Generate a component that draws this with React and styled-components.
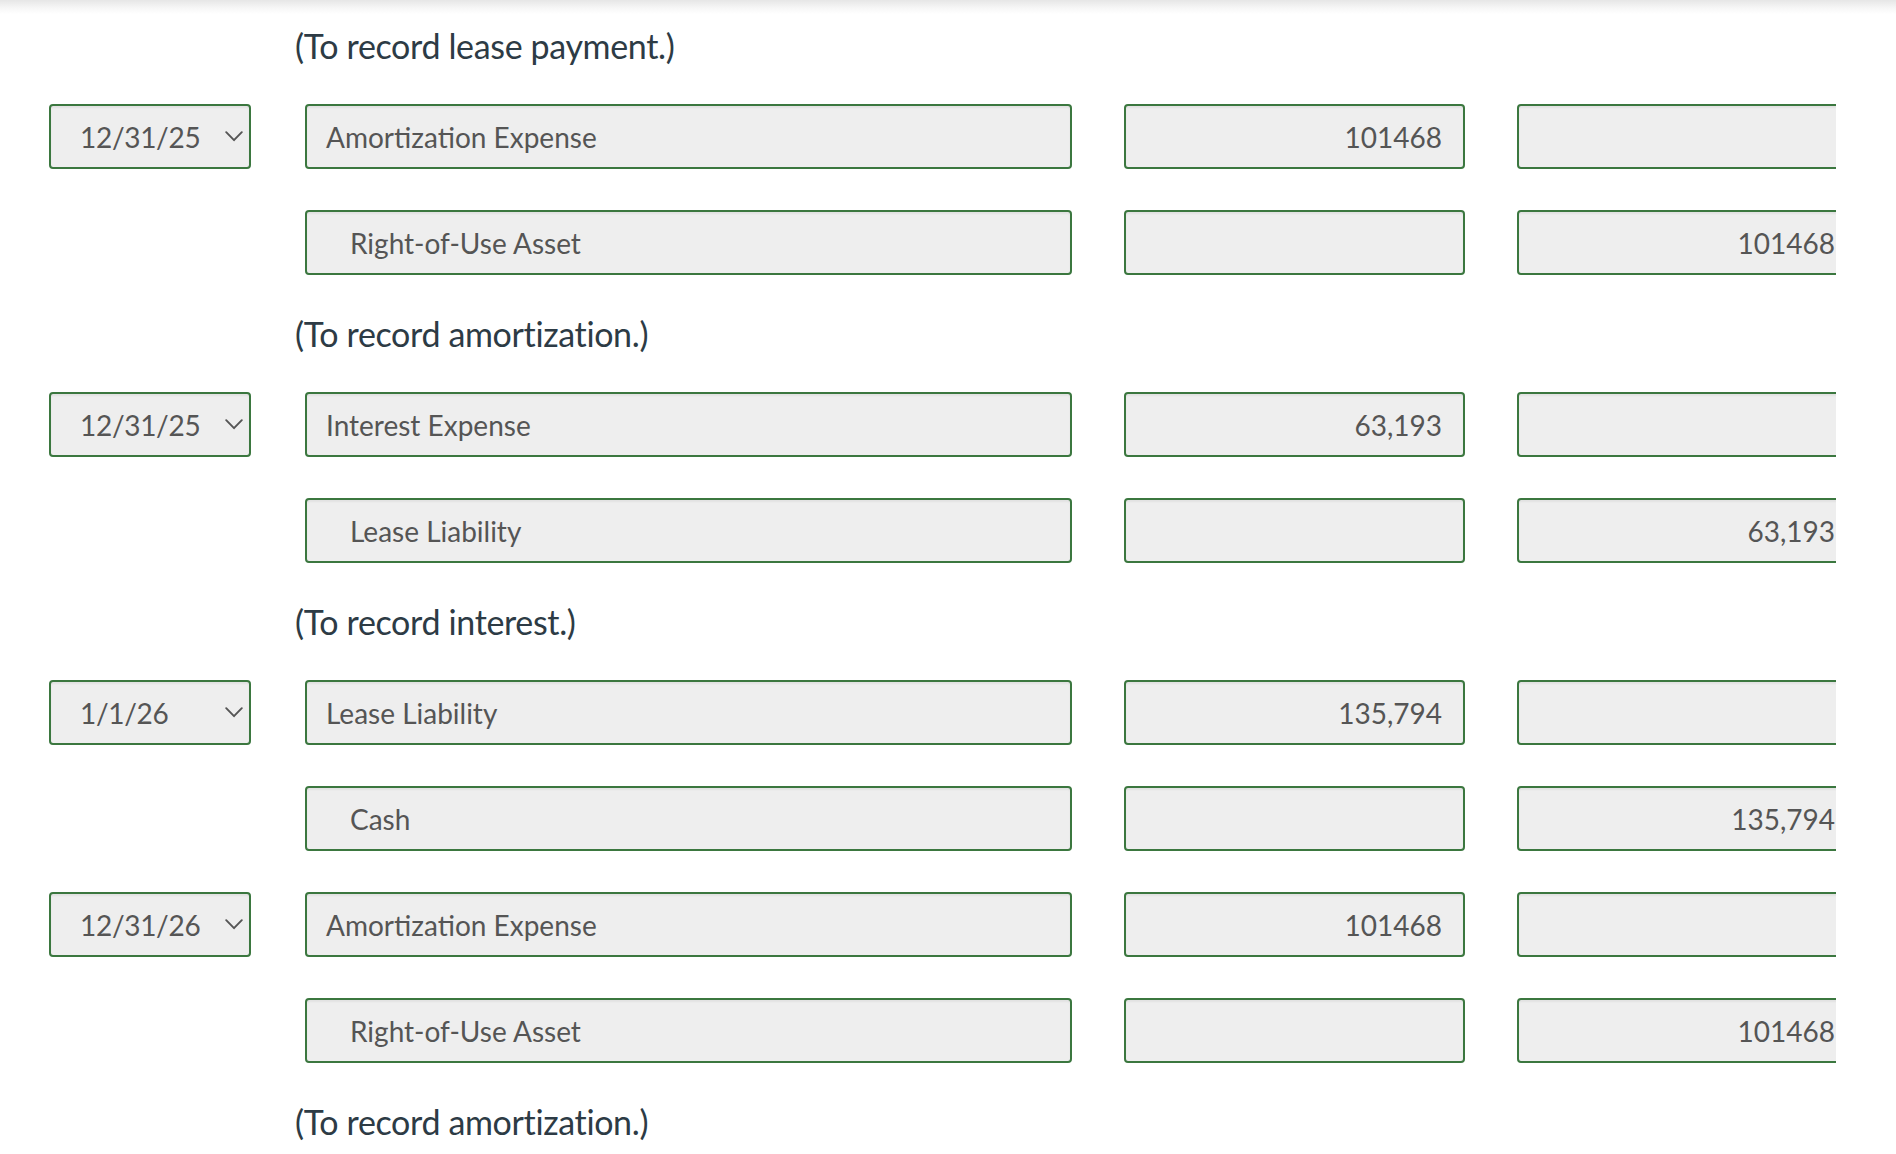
import React from "react";
import styled, { createGlobalStyle } from "styled-components";

const GlobalStyle = createGlobalStyle`
  html, body {
    margin: 0;
    padding: 0;
    background: #ffffff;
  }
  body {
    font-family: Lato, "Liberation Sans", sans-serif;
  }
  * { box-sizing: border-box; }
`;

const TopShade = styled.div`
  height: 14px;
  background: linear-gradient(to bottom, #e6e6e6 0%, #f6f6f6 55%, #ffffff 100%);
`;

const Sheet = styled.div`
  width: 1836px;
  overflow: hidden;
  padding: 14px 0 40px 49px;
  display: flex;
  flex-direction: column;
  gap: 41px;
`;

const Note = styled.p`
  margin: 0;
  padding-left: 246px;
  font-size: 34px;
  line-height: 35px;
  letter-spacing: -0.35px;
  color: #2d3b45;
  white-space: nowrap;
`;

const Line = styled.div`
  display: grid;
  grid-template-columns: 204px 767px 341px 341px;
  column-gap: 52px;
  height: 65px;
`;

const Field = styled.div`
  height: 65px;
  display: flex;
  align-items: center;
  justify-content: ${(p) => (p.$numeric ? "flex-end" : "flex-start")};
  padding: 0 21px 0 ${(p) => (p.$indent ? 43 : 19)}px;
  border: 2px solid #3b773f;
  border-radius: 4px;
  background: #eeeeee;
  box-shadow: inset 0 2px 2px rgba(0, 0, 0, 0.05);
  font-size: 28px;
  color: #555555;
  white-space: nowrap;
`;

const DateSelect = styled(Field)`
  width: 202px;
  justify-content: space-between;
  padding: 0 6px 0 29px;
  letter-spacing: -0.3px;
`;

const Spacer = styled.div``;

const Chevron = () => (
  <svg width="18" height="11" viewBox="0 0 18 11" fill="none">
    <path d="M1.2 1.2 L9 9.2 L16.8 1.2" stroke="#555" strokeWidth="1.9" strokeLinecap="round" strokeLinejoin="round" />
  </svg>
);

const entries = [
  { type: "note", text: "(To record lease payment.)" },
  { type: "line", date: "12/31/25", account: "Amortization Expense", debit: "101468", credit: "" },
  { type: "line", account: "Right-of-Use Asset", indent: true, debit: "", credit: "101468" },
  { type: "note", text: "(To record amortization.)" },
  { type: "line", date: "12/31/25", account: "Interest Expense", debit: "63,193", credit: "" },
  { type: "line", account: "Lease Liability", indent: true, debit: "", credit: "63,193" },
  { type: "note", text: "(To record interest.)" },
  { type: "line", date: "1/1/26", account: "Lease Liability", debit: "135,794", credit: "" },
  { type: "line", account: "Cash", indent: true, debit: "", credit: "135,794" },
  { type: "line", date: "12/31/26", account: "Amortization Expense", debit: "101468", credit: "" },
  { type: "line", account: "Right-of-Use Asset", indent: true, debit: "", credit: "101468" },
  { type: "note", text: "(To record amortization.)" },
];

export default function App() {
  return (
    <>
      <GlobalStyle />
      <TopShade />
      <Sheet>
        {entries.map((e, i) =>
          e.type === "note" ? (
            <Note key={i}>{e.text}</Note>
          ) : (
            <Line key={i}>
              {e.date ? (
                <DateSelect>
                  <span>{e.date}</span>
                  <Chevron />
                </DateSelect>
              ) : (
                <Spacer />
              )}
              <Field $indent={e.indent}>{e.account}</Field>
              <Field $numeric>{e.debit}</Field>
              <Field $numeric>{e.credit}</Field>
            </Line>
          )
        )}
      </Sheet>
    </>
  );
}
